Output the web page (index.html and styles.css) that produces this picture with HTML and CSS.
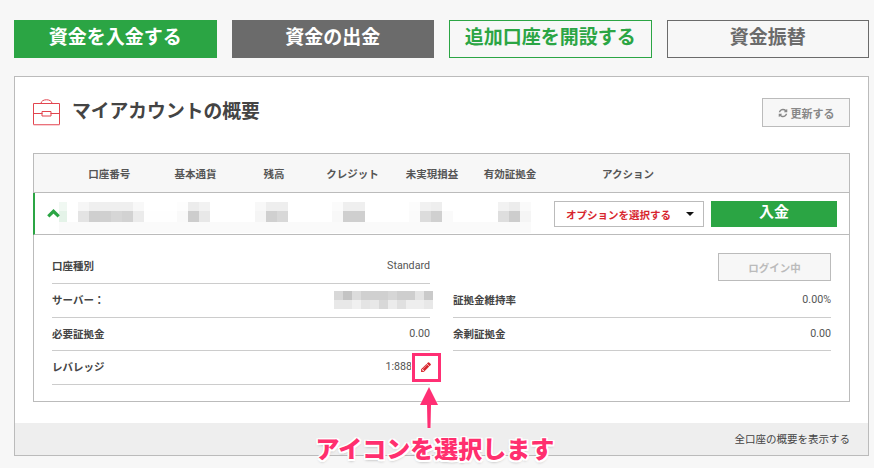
FILE: index.html
```html
<!DOCTYPE html>
<html lang="ja">
<head>
<meta charset="utf-8">
<title>マイアカウントの概要</title>
<link rel="stylesheet" href="styles.css">
</head>
<body>
<div class="page">
  <nav class="actions">
    <a class="btn btn-green">資金を入金する</a>
    <a class="btn btn-gray">資金の出金</a>
    <a class="btn btn-outline-green">追加口座を開設する</a>
    <a class="btn btn-outline-gray">資金振替</a>
  </nav>

  <section class="panel">
    <header class="panel-head">
      <svg class="case-icon" viewBox="0 0 27 27" aria-hidden="true">
        <path class="case-line" d="M.5 4.500h26v21H.5zM.5 14.500h9M17.500 14.500h9M9 12.500h9v4.500H9zM8 4.500C8 -.5 19 -.5 19 4.500"/>
        <path class="case-base" d="M.5 26h26"/>
      </svg>
      <h1 class="panel-title">マイアカウントの概要</h1>
      <button class="refresh">
        <svg class="refresh-icon" viewBox="0 0 1792 1792" aria-hidden="true"><path d="M1639 1056q0 5-1 7-64 268-268 434.5t-478 166.5q-146 0-282.5-55t-243.5-157l-129 129q-19 19-45 19t-45-19-19-45v-448q0-26 19-45t45-19h448q26 0 45 19t19 45-19 45l-137 137q71 66 161 102t187 36q134 0 250-65t186-179q11-17 53-117 8-23 30-23h192q13 0 22.5 9.5t9.5 22.5zm25-800v448q0 26-19 45t-45 19h-448q-26 0-45-19t-19-45 19-45l138-138q-148-137-349-137-134 0-250 65t-186 179q-11 17-53 117-8 23-30 23h-199q-13 0-22.5-9.5t-9.5-22.5v-7q65-268 270-434.5t480-166.5q146 0 284 55.5t245 156.5l130-129q19-19 45-19t45 19 19 45z"/></svg>
        更新する
      </button>
    </header>

    <div class="table">
      <div class="table-head">
        <span>口座番号</span><span>基本通貨</span><span>残高</span><span>クレジット</span><span>未実現損益</span><span>有効証拠金</span><span>アクション</span>
      </div>
      <div class="account-row">
        <div class="mosaic mosaic-row" aria-hidden="true"><i class="m1"></i><i class="m2"></i><i class="m3"></i></div>
        <svg class="chevron" viewBox="0 0 12 8" aria-hidden="true"><path d="M1.200 6.600 6 2l4.800 4.600"/></svg>
        <div class="select">オプションを選択する<i class="caret"></i></div>
        <a class="deposit">入金</a>
      </div>
      <div class="details">
        <div class="column">
          <div class="item"><b>口座種別</b><span>Standard</span></div>
          <div class="item"><b>サーバー：</b><div class="mosaic-server" aria-hidden="true"><i class="s1"></i><i class="s2"></i></div></div>
          <div class="item"><b>必要証拠金</b><span>0.00</span></div>
          <div class="item"><b>レバレッジ</b><span class="leverage">1:888<svg class="pencil" viewBox="0 0 1515 1536" aria-hidden="true"><path d="M363 1408l91-91-235-235-91 91v107h128v128h107zm523-928q0-22-22-22-10 0-17 7l-542 542q-7 7-7 17 0 22 22 22 10 0 17-7l542-542q7-7 7-17zm-54-192l416 416-832 832h-416v-416zm683 96q0 53-37 90l-166 166-416-416 166-165q36-38 90-38 53 0 91 38l235 234q37 39 37 91z"/></svg></span></div>
        </div>
        <div class="column">
          <div class="item item-plain"><a class="login">ログイン中</a></div>
          <div class="item"><b>証拠金維持率</b><span>0.00%</span></div>
          <div class="item"><b>余剰証拠金</b><span>0.00</span></div>
        </div>
      </div>
    </div>

    <footer class="panel-foot">全口座の概要を表示する</footer>
  </section>

  <div class="mark-box"></div>
  <svg class="mark-arrow" viewBox="0 0 18 42" aria-hidden="true"><path d="M9 0 18 18H11L10.500 41H7.500L7 18H0z"/></svg>
  <div class="mark-text">アイコンを選択します</div>
</div>
</body>
</html>
```
FILE: styles.css
```css
* { box-sizing: border-box; }

html, body { margin: 0; padding: 0; }

body {
  background: #f7f7f7;
  color: #444;
  font-family: "Noto Sans CJK JP", "Noto Sans", sans-serif;
}

.page {
  position: relative;
  width: 874px;
  height: 468px;
  overflow: hidden;
  padding: 20px 5px 0 14px;
}

/* top actions */
.actions {
  display: grid;
  grid-template-columns: repeat(4, 1fr);
  gap: 15px;
  height: 38px;
  margin-bottom: 18px;
}

.btn {
  display: flex;
  align-items: center;
  justify-content: center;
  padding-bottom: 8px;
  font-size: 19px;
  font-weight: 700;
  line-height: 1;
}
.btn-green { background: #2ba544; color: #fff; }
.btn-gray { background: #6b6b6b; color: #fff; }
.btn-outline-green { border: 1px solid #2ba544; color: #2ba544; }
.btn-outline-gray { border: 1px solid #6b6b6b; color: #6b6b6b; }

/* panel */
.panel {
  border: 1px solid #bbb;
  background: #fff;
}

.panel-head {
  display: flex;
  align-items: center;
  height: 29px;
  margin: 21px 18px 26px;
}

.case-icon {
  width: 27px;
  height: 27px;
  margin-right: 12px;
  fill: none;
}
.case-line { stroke: #e2454f; stroke-width: 1; }
.case-base { stroke: #f3a0a8; stroke-width: 1; }

.panel-title {
  flex: 1;
  margin: 0 0 4px;
  color: #444;
  font-size: 18.800px;
  font-weight: 700;
  line-height: 1;
}

.refresh {
  display: flex;
  align-items: center;
  justify-content: center;
  gap: 3px;
  width: 88px;
  height: 29px;
  padding: 0;
  border: 1px solid #bbb;
  background: #f7f7f7;
  color: #888;
  font: 700 11px "Noto Sans CJK JP", sans-serif;
}
.refresh-icon { width: 10px; height: 10px; fill: #888; }

/* table */
.table {
  margin: 0 18px 21px;
  border: 1px solid #bbb;
}

.table-head {
  display: grid;
  grid-template-columns: 118.500px 86px 71px 86px 73px 83px 153px;
  align-items: center;
  height: 39px;
  border-bottom: 1px solid #bbb;
  background: #f7f7f7;
  color: #555;
  font-size: 10.500px;
  font-weight: 700;
  text-align: center;
}
.table-head span:first-child { padding-left: 32px; }

.account-row {
  position: relative;
  display: flex;
  align-items: flex-start;
  height: 42px;
  margin-left: -1px;
  padding: 8px 12px 0 0;
  border-left: 2px solid #2ba544;
  border-bottom: 1px solid #bbb;
}

.chevron {
  position: absolute;
  left: 12px;
  top: 16px;
  width: 13px;
  height: 9px;
  fill: none;
  stroke: #2ba544;
  stroke-width: 3;
}

.mosaic {
  position: absolute;
  left: 24px;
  top: 9px;
  width: 472px;
  display: grid;
  grid-template-rows: 9px 11px 11px;
}
.mosaic i { display: block; }
.m1 {
  background: linear-gradient(90deg,
    #f0f8f2 0 8px, #fff 8px 19px, #f6f6f6 19px 30px, #efefef 30px 74px, #f8f8f8 74px 85px, #fff 85px 118px,
    #fdfdfd 118px 129px, #ececec 129px 140px, #f2f2f2 140px 151px, #fff 151px 196px, #f8f8f8 196px 207px,
    #eee 207px 229px, #fff 229px 273px, #fbfbfb 273px 284px, #efefef 284px 306px, #fff 306px 350px,
    #fcfcfc 350px 361px, #f1f1f1 361px 372px, #eee 372px 383px, #fff 383px 439px, #f2f2f2 439px 450px,
    #ececec 450px 461px, #fafafa 461px 472px);
}
.m2 {
  background: linear-gradient(90deg,
    #e4f3e8 0 8px, #fff 8px 19px, #e4e4e4 19px 30px, #cfcfcf 30px 41px, #d0d0d0 41px 52px, #d6d6d6 52px 63px,
    #d2d2d2 63px 74px, #ebebeb 74px 85px, #fefefe 85px 118px, #f9f9f9 118px 129px, #cdcdcd 129px 140px,
    #e8e8e8 140px 151px, #fff 151px 196px, #f5f5f5 196px 207px, #d0d0d0 207px 218px, #d8d8d8 218px 229px,
    #fff 229px 273px, #f8f8f8 273px 284px, #cfcfcf 284px 306px, #fff 306px 350px, #fbfbfb 350px 361px,
    #dcdcdc 361px 372px, #d0d0d0 372px 383px, #fafafa 383px 394px, #fff 394px 439px, #dedede 439px 450px,
    #cdcdcd 450px 461px, #f5f5f5 461px 472px);
}
.m3 { background: #fafafa; }

.select {
  position: relative;
  display: flex;
  align-items: center;
  width: 150px;
  height: 26px;
  margin-left: auto;
  padding-left: 11px;
  border: 1px solid #bbb;
  color: #d7262e;
  font-size: 10.500px;
  font-weight: 700;
}
.caret {
  position: absolute;
  right: 9px;
  top: 10px;
  border-top: 4.500px solid #111;
  border-left: 4px solid transparent;
  border-right: 4px solid transparent;
}

.deposit {
  display: flex;
  align-items: center;
  justify-content: center;
  width: 126px;
  height: 26px;
  margin-left: 7px;
  padding-bottom: 7px;
  background: #2ba544;
  color: #fff;
  font-size: 15px;
  font-weight: 700;
}

/* details */
.details {
  display: grid;
  grid-template-columns: 378px 378px;
  column-gap: 23px;
  padding: 15.300px 18px 16px;
}

.column {
  display: grid;
  grid-auto-rows: 33.670px;
}

.item {
  display: flex;
  align-items: center;
  justify-content: space-between;
  padding-bottom: 1.500px;
  border-bottom: 1px solid #ccc;
  color: #555;
  font-family: Roboto, "Noto Sans CJK JP", sans-serif;
  font-size: 10.700px;
}
.item b {
  color: #444;
  font-family: "Noto Sans CJK JP", sans-serif;
  font-size: 10.500px;
  font-weight: 700;
}
.item-plain { border-bottom: 0; justify-content: flex-end; padding-bottom: 0; }

.leverage { display: flex; align-items: center; }
.pencil {
  width: 10px;
  height: 10px;
  margin: 0 -1px 0 9px;
  fill: #d7262e;
}

.mosaic-server {
  display: grid;
  width: 99px;
  margin-right: -3px;
  grid-template-rows: 9px 9px;
}
.mosaic-server i { display: block; }
.s1 {
  background: linear-gradient(90deg, #d8d8d8 0 9px, #c4c4c4 9px 18px, #dcdcdc 18px 27px, #d0d0d0 27px 54px,
    #d6d6d6 54px 63px, #cecece 63px 81px, #e4e4e4 81px 90px, #cacaca 90px 99px);
}
.s2 {
  background: linear-gradient(90deg, #e8e8e8 0 18px, #f0f0f0 18px 27px, #e4e4e4 27px 36px, #e8e8e8 36px 45px,
    #d8d8d8 45px 54px, #ececec 54px 63px, #e0e0e0 63px 72px, #eee 72px 90px, #e8e8e8 90px 99px);
}

.login {
  display: flex;
  align-items: center;
  justify-content: center;
  width: 113px;
  height: 28px;
  border: 1px solid #bbb;
  background: #f7f7f7;
  color: #bbb;
  font-family: "Noto Sans CJK JP", sans-serif;
  font-size: 10.500px;
  font-weight: 700;
}

.panel-foot {
  height: 32px;
  padding: 8px 18px 0 0;
  background: #eee;
  color: #444;
  font-size: 10.500px;
  line-height: 16px;
  text-align: right;
}

/* annotation */
.mark-box {
  position: absolute;
  left: 412px;
  top: 353px;
  width: 29px;
  height: 29px;
  border: 3px solid #ff2f74;
  box-shadow: 0 0 0 1px #fff;
}
.mark-arrow {
  position: absolute;
  left: 419.500px;
  top: 387px;
  width: 18px;
  height: 42px;
  fill: #ff2f74;
  filter: drop-shadow(0 0 1px #fff);
}
.mark-text {
  position: absolute;
  left: 315.500px;
  top: 433px;
  color: #ff2f6e;
  font-size: 24px;
  font-weight: 900;
  line-height: 30px;
  white-space: nowrap;
  text-shadow: 1.500px 0 0 #fff, -1.500px 0 0 #fff, 0 1.500px 0 #fff, 0 -1.500px 0 #fff, 1.500px 1.500px 0 #fff, -1.500px 1.500px 0 #fff, 1.500px -1.500px 0 #fff, -1.500px -1.500px 0 #fff, 0 2px 3px rgba(0, 0, 0, .35);
}
```
